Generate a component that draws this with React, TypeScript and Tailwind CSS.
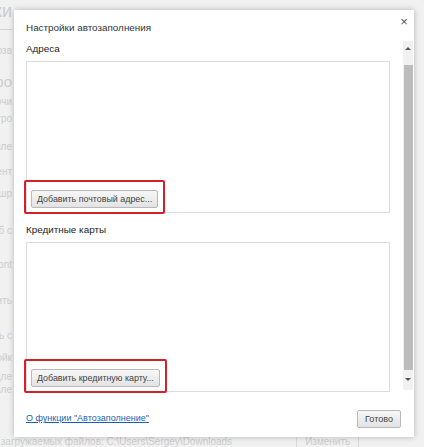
const bgLines = [
  { t: "Настройки", cls: "text-[18px] h-[22px]" },
  { t: "—————", cls: "h-[14px]" },
  { t: "Разрешить автозв", cls: "h-[30px]" },
  { t: "Автозаполнение фо", cls: "text-[15px] h-[30px]" },
  { t: "Настройки почи", cls: "h-[12px]" },
  { t: "Настройки стро", cls: "h-[22px]" },
  { t: "Управлять вле", cls: "h-[34px]" },
  { t: "Содержимое ент", cls: "h-[16px]" },
  { t: "Изменить шр", cls: "h-[28px]" },
  { t: "Масштаб с", cls: "h-[46px]" },
  { t: "Google Cont", cls: "h-[22px]" },
  { t: "Изменить нить", cls: "h-[50px]" },
  { t: "Загружать с", cls: "h-[20px]" },
  { t: "Настройки ойк", cls: "h-[24px]" },
  { t: "Управлять дле", cls: "h-[13px]" },
  { t: "Управлять вле", cls: "h-[13px]" },
];

const RedBox = ({ children }: { children: React.ReactNode }) => (
  <div className="ml-[-3px] mb-[-2px] w-fit rounded-[2px] border-2 border-[#d2202c] px-[5px] py-[3px]">
    {children}
  </div>
);

const GrayButton = ({ label }: { label: string }) => (
  <button className="h-[18px] whitespace-nowrap rounded-[2px] border border-[#b9b9b9] bg-gradient-to-b from-[#f7f7f7] to-[#e3e3e3] px-[5px] text-[8.9px] leading-[16px] text-[#444]">
    {label}
  </button>
);

export default function App() {
  return (
    <div
      className="relative h-[447px] w-[424px] overflow-hidden bg-[#f1f1f1]"
      style={{ fontFamily: '"Liberation Sans", Arial, sans-serif' }}
    >
      {/* faded page behind the dialog */}
      <div className="flex h-full flex-col text-[10px] leading-none text-[#cdcdcd]">
        <div className="ml-[-72px] flex flex-col">
          {bgLines.map((l, i) => (
            <div key={i} className={`flex w-[84px] items-center justify-end whitespace-nowrap ${l.cls}`}>
              {l.t}
            </div>
          ))}
        </div>
        <div className="mt-auto flex h-[11px] items-center whitespace-nowrap">
          <span className="ml-[-70px]">Расположение загружаемых файлов: C:\Users\Sergey\Downloads</span>
          <span className="ml-[64px] border-x border-[#d8d8d8] px-[8px]">Изменить</span>
        </div>
      </div>

      {/* dialog */}
      <div className="absolute left-[14px] top-[10px] flex h-[427px] w-[400px] flex-col bg-white shadow-[0_0_6px_rgba(0,0,0,0.25)]">
        <div className="flex flex-1">
          <div className="flex w-[377px] flex-col pl-[12px] pt-[9px]">
            <div className="flex h-[18px] items-center whitespace-nowrap text-[9.9px] text-[#333]">
              Настройки автозаполнения
            </div>
            <div className="mt-[3px] flex h-[18px] items-center text-[9.9px] text-[#222]">
              Адреса
            </div>
            <div className="mt-[3px] flex h-[152px] w-[364px] flex-col justify-end border border-[#dcdcdc]">
              <RedBox>
                <GrayButton label="Добавить почтовый адрес..." />
              </RedBox>
            </div>
            <div className="mt-[8px] flex h-[18px] items-center text-[9.9px] text-[#222]">
              Кредитные карты
            </div>
            <div className="mt-[3px] flex h-[150px] w-[364px] flex-col justify-end border border-[#dcdcdc]">
              <RedBox>
                <GrayButton label="Добавить кредитную карту..." />
              </RedBox>
            </div>
          </div>
          <div className="flex w-[23px] flex-col items-start">
            <div className="mt-[4px] ml-[6px] flex h-[14px] w-[14px] items-center justify-center text-[13px] leading-none text-[#555]">
              ×
            </div>
            <div className="mt-[13px] ml-[12px] flex h-[349px] w-[10px] flex-col items-center bg-[#f1f1f1]">
              <div className="flex h-[14px] items-center">
                <div className="h-0 w-0 border-x-[3px] border-b-[3px] border-x-transparent border-b-[#555]" />
              </div>
              <div className="mt-[10px] h-[305px] w-[9px] bg-[#bcbcbc]" />
              <div className="flex h-[18px] items-center">
                <div className="h-0 w-0 border-x-[3px] border-t-[3px] border-x-transparent border-t-[#555]" />
              </div>
            </div>
          </div>
        </div>
        <div className="flex h-[36px] items-center justify-between pl-[12px] pr-[13px]">
          <a href="#" className="whitespace-nowrap text-[9px] text-[#1a5fb4] underline">
            О функции "Автозаполнение"
          </a>
          <button className="h-[18px] w-[44px] rounded-[2px] border border-[#b9b9b9] bg-gradient-to-b from-[#f7f7f7] to-[#e3e3e3] text-[9px] leading-[16px] text-[#444]">
            Готово
          </button>
        </div>
      </div>
    </div>
  );
}
